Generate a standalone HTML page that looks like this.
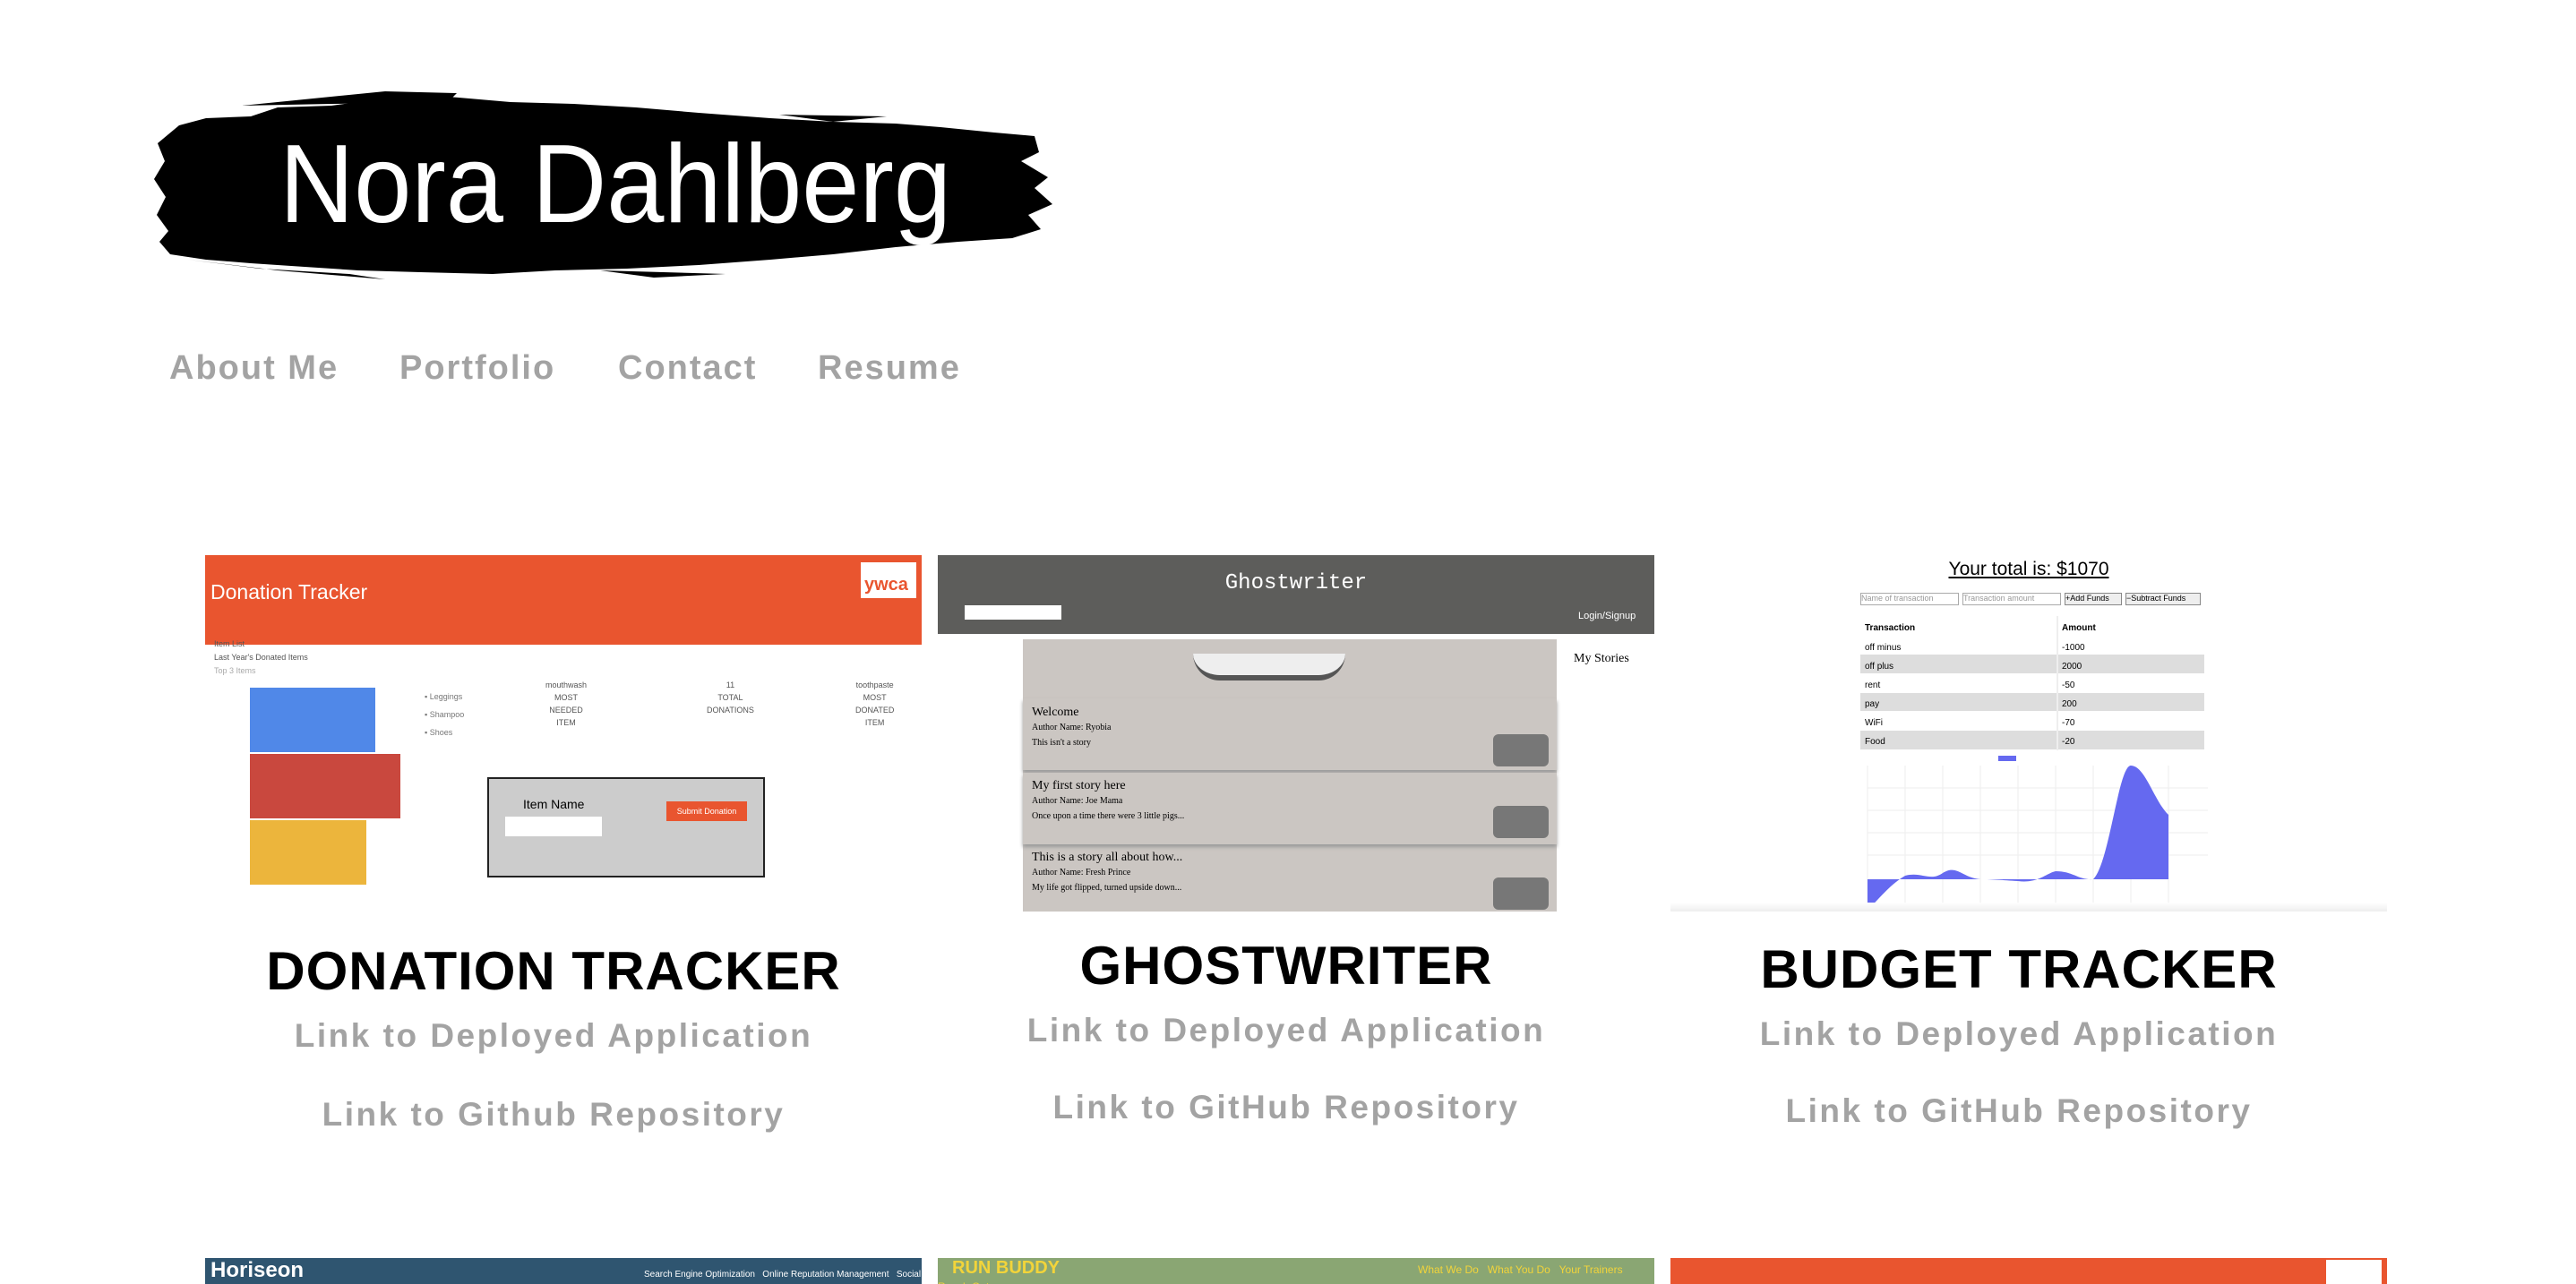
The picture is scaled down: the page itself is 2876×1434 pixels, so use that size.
<!DOCTYPE html>
<html><head><meta charset="utf-8"><style>
*{margin:0;padding:0;box-sizing:border-box}
body{width:2876px;height:1434px;overflow:hidden;background:#fff;font-family:"Liberation Sans",sans-serif;position:relative}
.abs{position:absolute}
.nav{position:absolute;top:390px;font-size:38px;font-weight:bold;color:#a3a3a3;letter-spacing:2px}
.title{position:absolute;font-size:60px;font-weight:bold;color:#000;letter-spacing:1px;text-align:center;width:820px}
.link{position:absolute;font-size:37px;font-weight:bold;color:#a3a3a3;letter-spacing:2.5px;text-align:center;width:820px}
.card{position:absolute;overflow:hidden}
</style></head><body>
<svg class="abs" style="left:170px;top:80px" width="1020" height="260" viewBox="0 0 1020 260">
<path d="M30 60 L60 52 L110 50 L140 40 L200 38 L260 30 L330 28 L400 34 L470 36 L540 40 L610 46 L690 52 L760 56 L830 58 L880 62 L940 68 L985 72 L990 90 L970 100 L1000 118 L985 130 L1005 148 L978 160 L992 176 L960 186 L900 190 L830 196 L760 204 L690 210 L610 216 L530 220 L450 222 L380 226 L300 224 L230 222 L170 218 L110 214 L60 210 L20 204 L8 190 L18 178 L5 160 L15 140 L2 120 L14 100 L6 80 Z" fill="#000"/>
<path d="M100 38 L260 22 L340 24 L330 34 L200 36 Z M700 48 L820 50 L760 56 Z M40 210 L140 222 L260 232 L220 226 L120 220 Z M500 222 L640 226 L560 230Z" fill="#000"/>
<text x="142" y="168" font-family="Liberation Sans, sans-serif" font-size="124" fill="#fff" textLength="750" lengthAdjust="spacingAndGlyphs">Nora Dahlberg</text>
</svg>
<div class="nav" style="left:189px">About Me</div>
<div class="nav" style="left:446px">Portfolio</div>
<div class="nav" style="left:690px">Contact</div>
<div class="nav" style="left:913px">Resume</div>

<!-- Card 1 -->
<div class="card" style="left:229px;top:620px;width:800px;height:398px;background:#fff">
<div class="abs" style="left:0;top:0;width:800px;height:100px;background:#e9552f"></div>
<div class="abs" style="left:6px;top:28px;color:#fff;font-size:23px">Donation Tracker</div>
<div class="abs" style="left:732px;top:8px;width:62px;height:40px;background:#fff;color:#e9552f;font-size:20px;font-weight:bold;padding-top:14px;padding-left:4px">ywca</div>
<div class="abs" style="left:10px;top:92px;font-size:9px;color:#555;line-height:15px">Item List<br>Last Year's Donated Items<br><span style="color:#aaa">Top 3 Items</span></div>
<div class="abs" style="left:50px;top:148px;width:140px;height:72px;background:#5088e8"></div>
<div class="abs" style="left:50px;top:222px;width:168px;height:72px;background:#c9483e"></div>
<div class="abs" style="left:50px;top:296px;width:130px;height:72px;background:#ecb53c"></div>
<div class="abs" style="left:245px;top:148px;font-size:9px;color:#777;line-height:20px">▪ Leggings<br>▪ Shampoo<br>▪ Shoes</div>
<div class="abs" style="left:380px;top:138px;font-size:9px;color:#555;line-height:14px;text-align:center">mouthwash<br>MOST<br>NEEDED<br>ITEM</div>
<div class="abs" style="left:560px;top:138px;font-size:9px;color:#555;line-height:14px;text-align:center">11<br>TOTAL<br>DONATIONS</div>
<div class="abs" style="left:726px;top:138px;font-size:9px;color:#555;line-height:14px;text-align:center">toothpaste<br>MOST<br>DONATED<br>ITEM</div>
<div class="abs" style="left:315px;top:248px;width:310px;height:112px;background:#ccc;border:2px solid #222"></div>
<div class="abs" style="left:355px;top:270px;font-size:14px">Item Name</div>
<div class="abs" style="left:515px;top:275px;width:90px;height:22px;background:#e9552f;color:#fff;font-size:9px;text-align:center;line-height:22px">Submit Donation</div>
<div class="abs" style="left:335px;top:292px;width:108px;height:22px;background:#fff"></div>
</div>

<!-- Card 2 -->
<div class="card" style="left:1047px;top:620px;width:800px;height:398px;background:#fff">
<div class="abs" style="left:0;top:0;width:800px;height:88px;background:#5d5d5b"></div>
<div class="abs" style="left:0;top:18px;width:800px;text-align:center;color:#fff;font-family:'Liberation Mono',monospace;font-size:24px">Ghostwriter</div>
<div class="abs" style="left:30px;top:56px;width:108px;height:16px;background:#fff"></div>
<div class="abs" style="left:715px;top:62px;color:#fff;font-size:11px">Login/Signup</div>
<div class="abs" style="left:95px;top:94px;width:596px;height:304px;background:#cbc6c2"></div>
<div class="abs" style="left:285px;top:110px;width:170px;height:30px;border-bottom:6px solid #555;border-radius:0 0 40px 40px;background:#eee"></div>
<div class="abs" style="left:710px;top:108px;font-family:'Liberation Serif',serif;font-size:14px">My Stories</div>
<div class="abs" style="left:95px;top:160px;width:596px;height:80px;background:#cbc6c2;box-shadow:0 3px 4px #999"></div>
<div class="abs" style="left:95px;top:243px;width:596px;height:80px;background:#cbc6c2;box-shadow:0 3px 4px #999"></div>
<div class="abs" style="left:105px;top:168px;font-family:'Liberation Serif',serif;font-size:14px;line-height:16px">Welcome<br><span style="font-size:10px">Author Name: Ryobia<br>This isn't a story</span></div>
<div class="abs" style="left:105px;top:250px;font-family:'Liberation Serif',serif;font-size:14px;line-height:16px">My first story here<br><span style="font-size:10px">Author Name: Joe Mama<br>Once upon a time there were 3 little pigs...</span></div>
<div class="abs" style="left:105px;top:330px;font-family:'Liberation Serif',serif;font-size:14px;line-height:16px">This is a story all about how...<br><span style="font-size:10px">Author Name: Fresh Prince<br>My life got flipped, turned upside down...</span></div>
<div class="abs" style="left:620px;top:200px;width:62px;height:36px;background:#777;border-radius:6px"></div>
<div class="abs" style="left:620px;top:280px;width:62px;height:36px;background:#777;border-radius:6px"></div>
<div class="abs" style="left:620px;top:360px;width:62px;height:36px;background:#777;border-radius:6px"></div>
</div>

<!-- Card 3 -->
<div class="card" style="left:1865px;top:620px;width:800px;height:398px;background:#fff">
<div class="abs" style="left:0;top:4px;width:800px;text-align:center;font-size:21px;text-decoration:underline">Your total is: $1070</div>
<div class="abs" style="left:212px;top:42px;width:110px;height:14px;border:1px solid #aaa;font-size:9px;color:#999">Name of transaction</div>
<div class="abs" style="left:326px;top:42px;width:110px;height:14px;border:1px solid #aaa;font-size:9px;color:#999">Transaction amount</div>
<div class="abs" style="left:440px;top:42px;width:64px;height:14px;border:1px solid #888;background:#eee;font-size:9px">+Add Funds</div>
<div class="abs" style="left:508px;top:42px;width:84px;height:14px;border:1px solid #888;background:#eee;font-size:9px">−Subtract Funds</div>
<svg class="abs" style="left:212px;top:68px" width="384" height="155"><g font-family="Liberation Sans" font-size="10">
<rect y="43" width="384" height="21" fill="#ddd"/>
<text x="5" y="16" font-weight="bold">Transaction</text><text x="225" y="16" font-weight="bold">Amount</text>
<text x="5" y="38">off minus</text><text x="225" y="38">-1000</text>
<text x="5" y="59">off plus</text><text x="225" y="59">2000</text>
<text x="5" y="80">rent</text><text x="225" y="80">-50</text>
<rect y="86" width="384" height="20" fill="#ddd"/><text x="5" y="101">pay</text><text x="225" y="101">200</text>
<text x="5" y="122">WiFi</text><text x="225" y="122">-70</text>
<rect y="128" width="384" height="21" fill="#ddd"/><text x="5" y="143">Food</text><text x="225" y="143">-20</text>
<line x1="220" y1="0" x2="220" y2="150" stroke="#eee" stroke-width="2"/></g></svg>
<div class="abs" style="left:366px;top:224px;width:20px;height:6px;background:#6569f0"></div>
<svg class="abs" style="left:210px;top:235px" width="400" height="165"><g stroke="#eee"><line x1="10" y1="0" x2="10" y2="165"/><line x1="52" y1="0" x2="52" y2="165"/><line x1="94" y1="0" x2="94" y2="165"/><line x1="136" y1="0" x2="136" y2="165"/><line x1="178" y1="0" x2="178" y2="165"/><line x1="220" y1="0" x2="220" y2="165"/><line x1="262" y1="0" x2="262" y2="165"/><line x1="304" y1="0" x2="304" y2="165"/><line x1="346" y1="0" x2="346" y2="165"/><line x1="10" y1="25" x2="390" y2="25"/><line x1="10" y1="50" x2="390" y2="50"/><line x1="10" y1="75" x2="390" y2="75"/><line x1="10" y1="100" x2="390" y2="100"/></g>
<path d="M10 127 L10 162 C30 140 40 130 52 123 C70 118 80 130 94 120 C110 110 115 125 136 127 C150 127 160 128 178 129 C200 132 210 120 220 118 C240 118 245 128 262 127 C280 110 290 0 304 0 C320 0 330 40 346 55 L346 127 Z" fill="#6569f0"/></svg>
<div class="abs" style="left:0;top:388px;width:800px;height:10px;background:linear-gradient(#fff,#eee)"></div>
</div>

<div class="title" style="left:208px;top:1050px">DONATION TRACKER</div>
<div class="link" style="left:208px;top:1136px">Link to Deployed Application</div>
<div class="link" style="left:208px;top:1224px">Link to Github Repository</div>
<div class="title" style="left:1026px;top:1044px">GHOSTWRITER</div>
<div class="link" style="left:1026px;top:1130px">Link to Deployed Application</div>
<div class="link" style="left:1026px;top:1216px">Link to GitHub Repository</div>
<div class="title" style="left:1844px;top:1048px">BUDGET TRACKER</div>
<div class="link" style="left:1844px;top:1134px">Link to Deployed Application</div>
<div class="link" style="left:1844px;top:1220px">Link to GitHub Repository</div>

<div class="card" style="left:229px;top:1405px;width:800px;height:29px;background:#2f5570"><span style="color:#fff;font-size:24px;font-weight:bold;margin-left:6px">Horiseon</span><span style="color:#fff;font-size:10px;margin-left:380px">Search Engine Optimization &nbsp; Online Reputation Management &nbsp; Social Media Marketing</span></div>
<div class="card" style="left:1047px;top:1405px;width:800px;height:29px;background:#8aa673"><span style="color:#f2d43a;font-size:20px;font-weight:bold;margin-left:16px">RUN BUDDY</span><span style="color:#f2d43a;font-size:12px;margin-left:400px">What We Do &nbsp; What You Do &nbsp; Your Trainers &nbsp; Reach Out</span></div>
<div class="card" style="left:1865px;top:1405px;width:800px;height:29px;background:#e9552f"><div class="abs" style="left:732px;top:2px;width:62px;height:27px;background:#fff"></div></div>
</body></html>
